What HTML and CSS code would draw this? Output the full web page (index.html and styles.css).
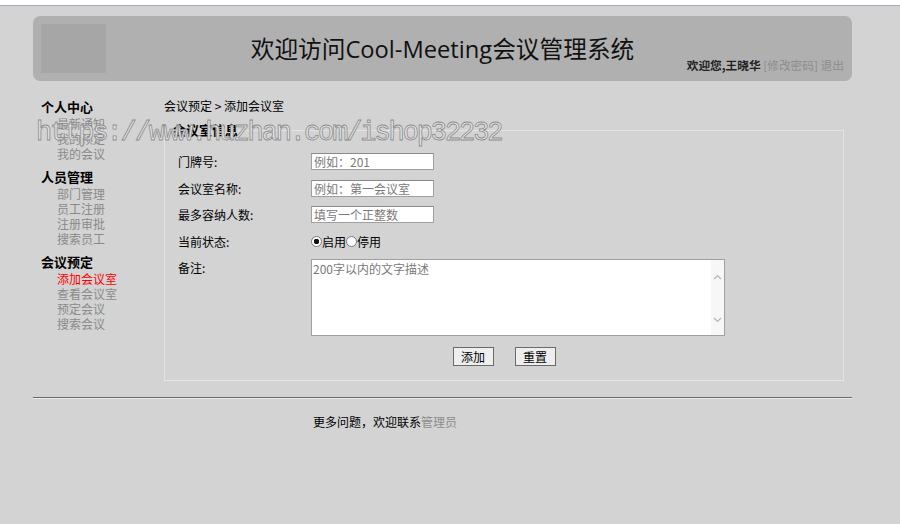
FILE: index.html
```html
<!DOCTYPE html>
<html>
  <head>
    <meta charset="utf-8" />
    <title>Cool-Meeting 会议管理系统</title>
    <link rel="stylesheet" href="styles.css">
  </head>
  <body>
    <div id="topbar"></div>

    <div id="page">
      <div id="header">
        <div class="logo-cell"><div id="logo"></div></div>
        <h1 id="title">欢迎访问Cool-Meeting会议管理系统</h1>
        <div id="userinfo">
          欢迎您,王晓华 <a href="#" class="weak">[修改密码]</a> <a href="#" class="weak">退出</a>
        </div>
      </div>

      <div id="content">
        <div id="sidebar">
          <div class="menu-title first">个人中心</div>
          <a href="#" class="menu-item">最新通知</a>
          <a href="#" class="menu-item">我的预定</a>
          <a href="#" class="menu-item">我的会议</a>

          <div class="menu-title">人员管理</div>
          <a href="#" class="menu-item">部门管理</a>
          <a href="#" class="menu-item">员工注册</a>
          <a href="#" class="menu-item">注册审批</a>
          <a href="#" class="menu-item">搜索员工</a>

          <div class="menu-title">会议预定</div>
          <a href="#" class="menu-item current">添加会议室</a>
          <a href="#" class="menu-item">查看会议室</a>
          <a href="#" class="menu-item">预定会议</a>
          <a href="#" class="menu-item">搜索会议</a>
        </div>

        <div id="main">
          <div id="crumb">会议预定 &gt; 添加会议室</div>
          <fieldset id="roomform">
            <legend>会议室信息</legend>
            <div class="rows">
              <label class="label">门牌号:</label>
              <input type="text" class="field" placeholder="例如：201" />

              <label class="label">会议室名称:</label>
              <input type="text" class="field" placeholder="例如：第一会议室" />

              <label class="label">最多容纳人数:</label>
              <input type="text" class="field" placeholder="填写一个正整数" />

              <span class="label">当前状态:</span>
              <div class="radios">
                <input type="radio" name="status" class="radio" checked /><span>启用</span>
                <input type="radio" name="status" class="radio" /><span>停用</span>
              </div>

              <label class="label">备注:</label>
              <div class="memo-box">
                <textarea class="memo" placeholder="200字以内的文字描述"></textarea>
                <div class="memo-track">
                  <svg width="9" height="6" viewBox="0 0 9 6"><path d="M1 5 L4.5 1.5 L8 5" fill="none" stroke="#b4b4b4" stroke-width="1.2"/></svg>
                  <svg width="9" height="6" viewBox="0 0 9 6"><path d="M1 1 L4.5 4.5 L8 1" fill="none" stroke="#b4b4b4" stroke-width="1.2"/></svg>
                </div>
              </div>
            </div>
            <div class="buttons">
              <button class="btn">添加</button>
              <button class="btn">重置</button>
            </div>
          </fieldset>
        </div>
      </div>

      <div id="footer">
        <div class="rule"></div>
        <div class="footer-text">更多问题，欢迎联系<a href="#" class="weak">管理员</a></div>
      </div>
    </div>

    <div id="watermark">https://www.huzhan.com/ishop32232</div>
  </body>
</html>
```

FILE: styles.css
```css
body {
  margin: 0;
  background-color: #d3d3d3;
  font-family: "Noto Sans CJK SC", sans-serif;
  font-size: 12px;
  color: #000;
}

a {
  text-decoration: none;
}

#topbar {
  height: 5px;
  background: white;
  border-bottom: 1px solid #a3abbb;
}

#page {
  margin-left: 33px;
  width: 819px;
}

#header {
  margin-top: 10px;
  height: 65px;
  box-sizing: border-box;
  padding: 8px;
  background: #b0b0b0;
  border-radius: 7px;
  display: grid;
  grid-template-columns: 1fr auto 1fr;
}

#logo {
  width: 65px;
  height: 49px;
  background: #a6a6a6;
}

#title {
  margin: 0;
  align-self: center;
  font-family: "Open Sans", "Noto Sans CJK SC", sans-serif;
  font-size: 23.7px;
  font-weight: normal;
  line-height: 30px;
  color: #111;
}

#userinfo {
  align-self: end;
  justify-self: end;
  line-height: 16px;
  font-weight: bold;
  font-size: 11.7px;
  color: #222;
}

.weak {
  color: #8c8c8c;
  font-weight: normal;
}

#content {
  margin-top: 17px;
  display: flex;
}

#sidebar {
  width: 131px;
  padding-left: 8px;
  box-sizing: border-box;
  flex-shrink: 0;
}

.menu-title {
  margin-top: 7px;
  font-size: 13px;
  font-weight: bold;
  line-height: 18px;
}

.menu-title.first {
  margin-top: 0;
}

.menu-item {
  display: block;
  padding-left: 16px;
  line-height: 15px;
  color: #8a8a8a;
}

.menu-item.current {
  color: red;
}

#main {
  width: 680px;
}

#crumb {
  line-height: 16px;
  margin-bottom: 8px;
}

#roomform {
  margin: 0;
  padding: 0 8px 14px 8px;
  border: 1px solid #e4e4e4;
}

#roomform legend {
  padding: 0;
  font-size: 13px;
  font-weight: bold;
  line-height: 16px;
}

.rows {
  margin-left: 5px;
  padding-top: 15px;
  display: grid;
  grid-template-columns: 133px auto;
  row-gap: 9.5px;
  align-items: center;
  justify-items: start;
}

.label {
  line-height: 17px;
  align-self: start;
}

.field {
  width: 123px;
  height: 17px;
  box-sizing: border-box;
  margin: 0;
  padding: 0 2px;
  border: 1px solid #a0a0a0;
  border-top-color: #8a8a8a;
  background: white;
  font-family: "Noto Sans CJK SC", sans-serif;
  font-size: 12px;
}

.field::placeholder,
.memo::placeholder {
  color: #7a7a7a;
}

.radios {
  display: flex;
  align-items: center;
  height: 17px;
}

.radio {
  appearance: none;
  -webkit-appearance: none;
  width: 11px;
  height: 11px;
  margin: 0;
  border: 1px solid #7a7a7a;
  border-radius: 50%;
  background: white;
}

.radio:checked {
  background: radial-gradient(circle, #111 0, #111 2.5px, white 3px);
}

.memo-box {
  width: 414px;
  height: 77px;
  box-sizing: border-box;
  border: 1px solid #a0a0a0;
  background: white;
  display: flex;
}

.memo {
  flex: 1;
  margin: 0;
  padding: 1px 1px;
  border: none;
  outline: none;
  background: white;
  resize: none;
  overflow: hidden;
  font-family: "Noto Sans CJK SC", sans-serif;
  font-size: 12px;
  line-height: 16px;
}

.memo-track {
  width: 13px;
  background: #f7f7f7;
  display: flex;
  flex-direction: column;
  justify-content: space-between;
  align-items: center;
  padding: 14px 0 12px;
}

.buttons {
  margin-top: 11px;
  display: flex;
  justify-content: center;
  gap: 21px;
}

.btn {
  width: 41px;
  height: 19px;
  padding: 0;
  border: 1px solid #6a6a6a;
  background: #eeeeee;
  font-family: "Noto Sans CJK SC", sans-serif;
  font-size: 12px;
  line-height: 17px;
  color: #000;
}

#footer {
  margin-top: 16px;
}

.rule {
  height: 1px;
  background: #6b6b6b;
  border-bottom: 1px solid #ececec;
}

.footer-text {
  margin-top: 15px;
  padding-left: 280px;
  line-height: 16px;
}

#watermark {
  position: absolute;
  left: 36px;
  top: 116px;
  font-family: "Liberation Mono", monospace;
  font-size: 27px;
  letter-spacing: -2.1px;
  line-height: 34px;
  color: #e4e4e4;
  -webkit-text-stroke: 0.8px #8c8c8c;
  pointer-events: none;
}
```
